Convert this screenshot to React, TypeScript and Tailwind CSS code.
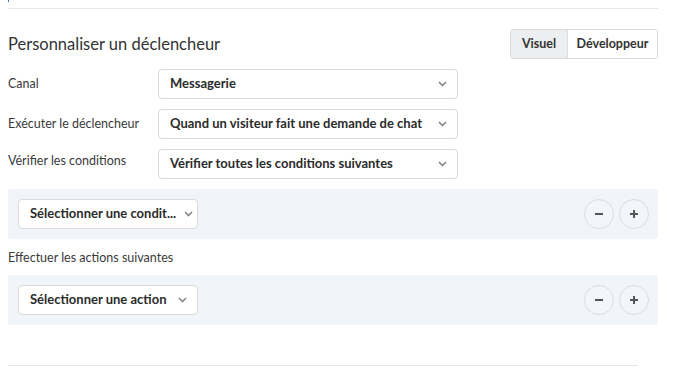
import { ReactNode } from "react";

const font = { fontFamily: 'Lato, "Open Sans", sans-serif' };

function Chevron() {
  return (
    <svg width="9" height="6" viewBox="0 0 9 6" className="ml-2 shrink-0">
      <path d="M1 1l3.5 3.5L8 1" fill="none" stroke="#888" strokeWidth="1.6" />
    </svg>
  );
}

function Select({ value, className }: { value: string; className: string }) {
  return (
    <div
      className={`flex h-[30px] items-center justify-between rounded-[4px] border border-[#dadada] bg-white pl-[11px] pr-[10px] ${className}`}
    >
      <span className="whitespace-nowrap text-[13px] font-bold text-[#2b2b2b]">{value}</span>
      <Chevron />
    </div>
  );
}

function Row({ label, value, labelClass }: { label: string; value: string; labelClass?: string }) {
  return (
    <div className="flex items-center">
      <div className={`w-[150px] text-[12.5px] text-[#3a3a3a] ${labelClass ?? ""}`}>{label}</div>
      <Select value={value} className="w-[300px]" />
    </div>
  );
}

function RoundBtn({ children }: { children: ReactNode }) {
  return (
    <div className="flex h-[30px] w-[30px] items-center justify-center rounded-full border border-[#dcdcdc] bg-[#f2f6fa]">
      {children}
    </div>
  );
}

function Panel({ value }: { value: string }) {
  return (
    <div className="flex h-[50px] items-center justify-between rounded-[3px] bg-[#f1f5f9] pl-[10px] pr-[9px]">
      <Select value={value} className="w-[180px]" />
      <div className="flex gap-[5px]">
        <RoundBtn>
          <svg width="10" height="10" viewBox="0 0 10 10">
            <path d="M1 5h8" stroke="#555" strokeWidth="2" />
          </svg>
        </RoundBtn>
        <RoundBtn>
          <svg width="10" height="10" viewBox="0 0 10 10">
            <path d="M1 5h8M5 1v8" stroke="#555" strokeWidth="2" />
          </svg>
        </RoundBtn>
      </div>
    </div>
  );
}

export default function App() {
  return (
    <div className="h-[374px] w-[675px] overflow-hidden bg-white" style={font}>
      <div className="w-[658px] pl-2">
        <div className="h-[2px] w-px bg-[#3b6fd6]" />
        <div className="mt-[6px] border-t border-[#e6e6e6]" />

        <div className="mt-[20px] flex items-center justify-between">
          <h2 className="text-[16.5px] text-[#333]">Personnaliser un déclencheur</h2>
          <div className="flex h-[30px] overflow-hidden rounded-[3px] border border-[#dcdcdc] text-[12.5px] font-bold text-[#333]">
            <div className="flex w-[56px] items-center justify-center bg-[#eceef0]">Visuel</div>
            <div className="flex w-[90px] items-center justify-center border-l border-[#dcdcdc] bg-white">Développeur</div>
          </div>
        </div>

        <div className="mt-[10px] flex flex-col gap-[10px]">
          <Row label="Canal" value="Messagerie" />
          <Row label="Exécuter le déclencheur" value="Quand un visiteur fait une demande de chat" />
          <Row label="Vérifier les conditions" value="Vérifier toutes les conditions suivantes" labelClass="-mt-[5px]" />
        </div>

        <div className="mt-[10px]">
          <Panel value="Sélectionner une condit..." />
        </div>

        <div className="mt-[10px] text-[12.5px] text-[#3a3a3a]">Effectuer les actions suivantes</div>

        <div className="mt-[7px]">
          <Panel value="Sélectionner une action" />
        </div>

        <div className="mt-[40px] w-[630px] border-t border-[#e6e6e6]" />
      </div>
    </div>
  );
}
